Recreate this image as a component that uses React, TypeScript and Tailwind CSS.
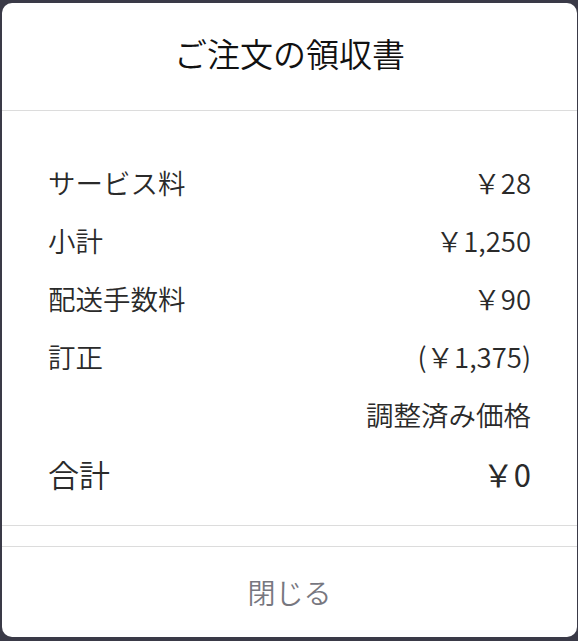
const rows = [
  { label: "サービス料", value: "￥28" },
  { label: "小計", value: "￥1,250" },
  { label: "配送手数料", value: "￥90" },
  { label: "訂正", value: "(￥1,375)" },
  { label: "", value: "調整済み価格" },
];

export default function App() {
  return (
    <div
      className="h-[641px] w-full bg-[#3a3a47] pl-[2px] pr-[1px] pt-[3px]"
      style={{ fontFamily: '"Noto Sans CJK JP", "Noto Sans", sans-serif' }}
    >
      <div className="flex h-[634px] flex-col overflow-hidden rounded-[10px] bg-white">
        <div className="flex h-[108px] shrink-0 items-center justify-center border-b border-[#dcdcdc] pb-[6px]">
          <h1 className="text-[33px] font-[350] leading-none text-[#111]">ご注文の領収書</h1>
        </div>
        <div className="flex flex-col px-[46px] pb-[23px] pt-[43px] font-[350] text-[#2a2a2a]">
          {rows.map((row, i) => (
            <div key={i} className="flex h-[58px] items-center justify-between text-[27.5px] leading-none">
              <span>{row.label}</span>
              <span>{row.value}</span>
            </div>
          ))}
          <div className="flex h-[58px] items-center justify-between text-[31px] leading-none">
            <span>合計</span>
            <span className="font-normal">￥0</span>
          </div>
        </div>
        <div className="h-[22px] shrink-0 border-y border-[#dcdcdc]" />
        <button
          type="button"
          className="flex flex-1 items-center justify-center text-[28px] font-[350] leading-none text-[#77777f]"
        >
          閉じる
        </button>
      </div>
    </div>
  );
}
